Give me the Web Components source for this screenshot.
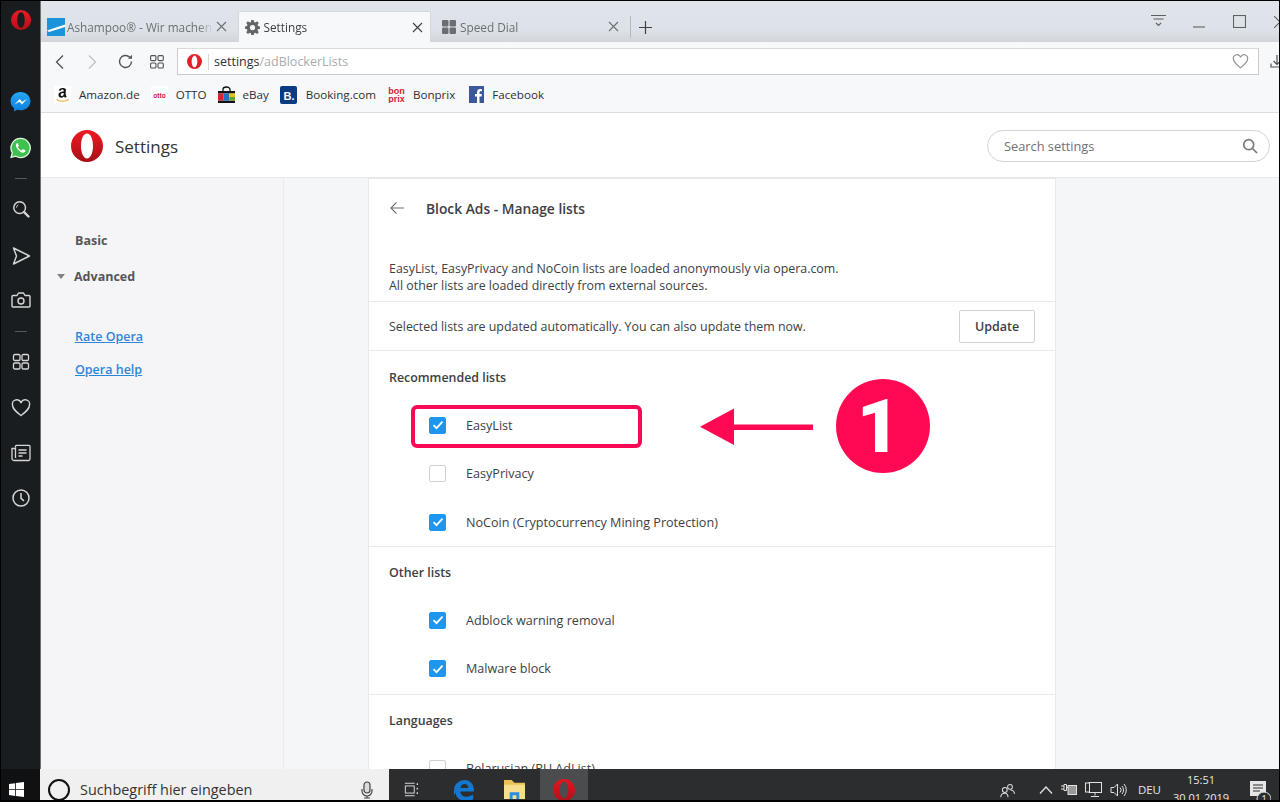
<!DOCTYPE html>
<html lang="en"><head><meta charset="utf-8"><title>Settings</title>
<style>
html,body{margin:0;padding:0;height:100%;overflow:hidden;background:#000}
body{font-family:"Open Sans","Noto Sans",sans-serif}
</style></head><body>
<x-app>
  <x-sidebar slot="side"></x-sidebar>
  <x-tabstrip slot="top"></x-tabstrip>
  <x-toolbar slot="top"></x-toolbar>
  <x-bookmarks slot="top"></x-bookmarks>
  <x-settings-head slot="top"></x-settings-head>
  <x-nav slot="nav"></x-nav>
  <x-card slot="main">
    <x-card-title>Block Ads - Manage lists</x-card-title>
    <x-desc>EasyList, EasyPrivacy and NoCoin lists are loaded anonymously via opera.com.<br>All other lists are loaded directly from external sources.</x-desc>
    <x-update>Selected lists are updated automatically. You can also update them now.</x-update>
    <x-section heading="Recommended lists" style="--pt:18px;--pb:13.800px;--rh:48.500px">
      <x-check checked>EasyList</x-check>
      <x-check>EasyPrivacy</x-check>
      <x-check checked>NoCoin (Cryptocurrency Mining Protection)</x-check>
    </x-section>
    <x-section heading="Other lists" style="--pt:17px;--pb:14px;--pe:1px">
      <x-check checked>Adblock warning removal</x-check>
      <x-check checked>Malware block</x-check>
    </x-section>
    <x-section heading="Languages" last style="--pt:17px;--pb:14px">
      <x-check>Belarusian (RU AdList)</x-check>
    </x-section>
  </x-card>
  <x-taskbar slot="task"></x-taskbar>
  <x-callout slot="over"></x-callout>
</x-app>
<script>
const opera=(s,a='#e8121f',b='#a80d18')=>`<svg width="${s}" height="${s}" viewBox="0 0 32 32" style="display:block"><defs><linearGradient id="og" x1="0" y1="0" x2="0" y2="1"><stop offset="0" stop-color="${a}"/><stop offset="1" stop-color="${b}"/></linearGradient></defs><path fill="url(#og)" fill-rule="evenodd" d="M16 0a16 16 0 1 0 0 32a16 16 0 1 0 0-32zM16 3.6c3.6 0 6 5.5 6 12.400s-2.400 12.400-6 12.400s-6-5.500-6-12.400s2.400-12.400 6-12.400z"/></svg>`;
function def(name,css,html,init){
  customElements.define(name,class extends HTMLElement{
    constructor(){super();const r=this.attachShadow({mode:'open'});
      r.innerHTML=`<style>${css}</style>${typeof html==='function'?html(this):html}`;}
    connectedCallback(){if(init)init(this,this.shadowRoot);}
  });
}
const stroke='fill="none" stroke="currentColor"';

def('x-app',`
:host{display:block;width:1280px;height:802px;box-sizing:border-box;border:solid #000;border-width:1px 1px 2px 1px;position:relative;overflow:hidden}
.shell{display:grid;grid-template-columns:40px 1fr;height:768px;overflow:hidden}
.col{display:flex;flex-direction:column;min-width:0;height:768px}
.body{flex:1;display:flex;min-height:0;overflow:hidden;background:#f5f6f8}
.nav{width:243px;flex:none}
.main{flex:1;display:flex;min-width:0;padding-left:84px}
`,`<div class="shell"><slot name="side"></slot><div class="col"><slot name="top"></slot><div class="body"><div class="nav"><slot name="nav"></slot></div><div class="main"><slot name="main"></slot></div></div></div></div><slot name="task"></slot><slot name="over"></slot>`);

def('x-sidebar',`
:host{display:flex;flex-direction:column;align-items:center;background:#1a1d1f;color:#d6d7d8;border-right:1px solid #6e7072;box-sizing:border-box;height:768px}
div{height:0;display:flex;align-items:center;justify-content:center;flex:none}
hr{width:12px;border:0;border-top:1px solid #55585a;margin:0;flex:none}
`,`
<div style="margin-top:19px">${opera(20,'#ec1b24','#b50f1b')}</div>
<div style="margin-top:82px"><svg width="21" height="22" viewBox="0 0 22 22"><defs><linearGradient id="mg" x1="0" y1="0" x2="0" y2="1"><stop offset="0" stop-color="#24a8f5"/><stop offset="1" stop-color="#0b7fe0"/></linearGradient></defs><path fill="url(#mg)" d="M11 .5C5 .5.6 4.800.6 10.200c0 3 1.400 5.500 3.600 7.300V21l3.300-1.800c1.100.3 2.300.5 3.500.5 6 0 10.400-4.300 10.400-9.500S17 .5 11 .5z"/><path fill="#fff" d="M4.800 13.600l5.300-5.700 2.700 2.800 5-2.800-5.300 5.700-2.700-2.800z"/></svg></div>
<div style="margin-top:46px"><svg width="21" height="22" viewBox="0 0 22 22"><path fill="#3fc14f" stroke="#e4f5e6" stroke-width="1.400" d="M11 1a10 10 0 0 0-8.600 15L1.200 20.800l4.900-1.200A10 10 0 1 0 11 1z"/><path fill="#fff" d="M7.800 5.800c-.9.200-1.700 1.600-1.500 3 .3 2.300 3.900 6.600 7 7.100 1.500.2 2.600-.8 2.800-1.700.1-.6 0-.8-.4-1l-1.900-.9c-.4-.2-.6-.1-.9.300l-.7.8c-.2.200-.4.200-.7.100-1.200-.5-2.500-1.700-3.200-2.900-.1-.3 0-.5.200-.7l.5-.7c.2-.2.200-.5.100-.7l-.8-2c-.2-.5-.5-.7-.5-.7z"/></svg></div>
<hr style="margin-top:30px">
<div style="margin-top:30px"><svg width="18" height="18" viewBox="0 0 20 20" ${stroke} stroke-width="1.600"><circle cx="8.500" cy="8.500" r="6.500"/><path d="M13.500 13.500l4.800 4.800" stroke-width="2.600" stroke-linecap="round"/><path d="M5 8.500a3.500 3.500 0 0 1 2-3.200" stroke-width="1"/></svg></div>
<div style="margin-top:47px"><svg width="20" height="20" viewBox="0 0 20 20" ${stroke} stroke-width="1.400" stroke-linejoin="round"><path d="M2.500 2l16 8-16 8 3-8z"/></svg></div>
<div style="margin-top:44px"><svg width="20" height="20" viewBox="0 0 20 20" ${stroke} stroke-width="1.400" stroke-linejoin="round"><path d="M2 5.500h4l1.500-2.500h5l1.500 2.500h4a1 1 0 0 1 1 1V16a1 1 0 0 1-1 1H2a1 1 0 0 1-1-1V6.500a1 1 0 0 1 1-1z"/><circle cx="10" cy="11" r="3"/></svg></div>
<hr style="margin-top:31px">
<div style="margin-top:30px"><svg width="18" height="18" viewBox="0 0 18 18" ${stroke} stroke-width="1.300"><rect x="1.500" y="1.500" width="6.500" height="6" rx="1.300"/><rect x="10" y="1.500" width="6.500" height="6" rx="1.300"/><rect x="1.500" y="10" width="6.500" height="6" rx="1.300"/><rect x="10" y="10" width="6.500" height="6" rx="1.300"/></svg></div>
<div style="margin-top:46px"><svg width="20" height="18" viewBox="0 0 20 18" ${stroke} stroke-width="1.400"><path d="M10 16.500C5 12.500 1.500 10 1.500 6A4.300 4.300 0 0 1 10 4.200 4.300 4.300 0 0 1 18.500 6c0 4-3.500 6.500-8.500 10.500z"/></svg></div>
<div style="margin-top:45px"><svg width="20" height="18" viewBox="0 0 20 18" ${stroke} stroke-width="1.300"><path d="M4.500 3.500V2.200a.8.800 0 0 1 .8-.8h12.900a.8.800 0 0 1 .8.800V15a1.500 1.500 0 0 1-1.500 1.500H3a2 2 0 0 1-2-2V4.500h3.500V14"/><path d="M7.500 6h8M7.500 9h8M7.500 12h4"/></svg></div>
<div style="margin-top:45px"><svg width="20" height="20" viewBox="0 0 20 20" ${stroke} stroke-width="1.500"><circle cx="10" cy="10" r="8"/><path d="M10 5v5.300l3 2.500"/></svg></div>
`);

def('x-tab',`
:host{display:flex;align-items:center;box-sizing:border-box;height:100%;width:var(--w,190px);font-size:11.800px;color:#6a6f74;padding:0 6px 0 var(--pl,0);gap:2px;flex:none;position:relative}
:host([active]){background:#f7f8fa;color:#3c3f42;border:1px solid #d4d8dc;border-bottom:0;border-radius:2px 2px 0 0}
.ic{width:18px;height:18px;flex:none;display:flex;align-items:center;justify-content:center}
.t{flex:1;white-space:nowrap;overflow:hidden;min-width:0;-webkit-mask-image:linear-gradient(90deg,#000 90%,transparent)}
.x{flex:none;width:13px;height:13px;margin-right:var(--mr,4px)}
`,`<span class="ic"><slot name="icon"></slot></span><span class="t"><slot></slot></span><svg class="x" viewBox="0 0 13 13" fill="none" stroke="currentColor" stroke-width="1.100"><path d="M2 2l9 9M11 2l-9 9"/></svg>`);

def('x-tabstrip',`
:host{display:flex;height:41px;flex:none;box-sizing:border-box;padding:10px 0 0 6px;background:linear-gradient(#e0e5eb 0,#dde2e8 70%,#d2d6db 100%);position:relative;align-items:stretch}
.sep{width:1px;height:22px;background:#b4b8bc;margin:5px 8px 0 0;flex:none}
.plus{width:13px;height:13px;margin-top:10px;color:#3f4245;flex:none}
.ctl{position:absolute;top:0;right:0;display:flex;align-items:center;height:26px;color:#55585b}
.ctl svg{display:block}
`,`
<x-tab style="--w:191px"><svg slot="icon" width="18" height="18" viewBox="0 0 18 18" style="display:block"><rect width="18" height="18" fill="#1b93d8"/><path d="M0 12.500L18 6.500V9L2 14z" fill="#fff"/></svg>Ashampoo® - Wir machen</x-tab>
<x-tab active style="--w:193px;--pl:4.500px;--mr:0px"><svg slot="icon" width="15" height="15" viewBox="0 0 16 16" style="display:block"><path fill="#62666a" fill-rule="evenodd" d="M6.700 0h2.600l.4 2.200 1.300.5 1.900-1.300 1.800 1.800-1.300 1.900.5 1.300 2.100.4v2.600l-2.100.4-.5 1.300 1.300 1.900-1.800 1.800-1.900-1.300-1.300.5-.4 2.200H6.700l-.4-2.200-1.300-.5-1.900 1.300-1.800-1.800 1.300-1.900-.5-1.300L0 9.400V6.800l2.100-.4.500-1.300-1.300-1.900 1.800-1.800L5 2.700l1.300-.5zM8 5.300a2.800 2.800 0 1 0 0 5.600a2.800 2.800 0 1 0 0-5.600z"/></svg>Settings</x-tab>
<span style="width:7px;flex:none"></span>
<x-tab style="--w:192px;--pl:2px"><svg slot="icon" width="14" height="14" viewBox="0 0 13 13" style="display:block"><g fill="#6b6f73"><rect width="6" height="6" rx="1"/><rect x="7" width="6" height="6" rx="1"/><rect y="7" width="6" height="6" rx="1"/><rect x="7" y="7" width="6" height="6" rx="1"/></g></svg>Speed Dial</x-tab>
<span class="sep"></span>
<svg class="plus" viewBox="0 0 13 13" fill="none" stroke="currentColor" stroke-width="1.200"><path d="M6.500 0v13M0 6.500h13"/></svg>
<div class="ctl">
<svg width="16" height="14" viewBox="0 0 16 14" fill="none" stroke="#5d6063" stroke-width="1.100" style="margin-right:26px;margin-top:13px"><path d="M0 1.500h15M2.500 5h10M5 9l2.500 2.500L10 9"/></svg>
<svg width="12" height="2" viewBox="0 0 12 2" style="margin-right:28px;margin-top:25px"><path d="M0 1h12" stroke="#5d6063" stroke-width="1.100"/></svg>
<svg width="13" height="13" viewBox="0 0 13 13" fill="none" stroke="#5d6063" stroke-width="1.100" style="margin-right:28px;margin-top:15px"><rect x=".5" y=".5" width="12" height="12"/></svg>
<svg width="12" height="12" viewBox="0 0 12 12" fill="none" stroke="#5d6063" stroke-width="1.100" style="margin-right:-7px;margin-top:15px"><path d="M0 0l12 12M12 0L0 12"/></svg>
</div>`);

def('x-toolbar',`
:host{display:flex;align-items:center;height:34px;flex:none;background:#f6f8fa;color:#4f5256;position:relative;box-sizing:border-box;padding:6px 0 1px}
svg{display:block;flex:none}
.a{flex:1;height:27px;box-sizing:border-box;margin:0 20px 0 0;border:1px solid #c9cccf;border-top-color:#d8dadc;background:#fff;display:flex;align-items:center;font-size:12.500px;color:#2e3033}
.o{margin:0 6px 0 9px}
.d{width:1px;height:16px;background:#d4d6d8;margin-right:5px}
.g{color:#a9acaf}
.h{margin-left:auto;margin-right:9px;color:#8a8d90}
.dl{position:absolute;right:-5px;top:12px;color:#4f5256}
`,`
<svg width="9" height="16" viewBox="0 0 9 16" fill="none" stroke="currentColor" stroke-width="1.300" style="margin-left:14px"><path d="M8 1.500L1.500 8 8 14.500"/></svg>
<svg width="9" height="16" viewBox="0 0 9 16" fill="none" stroke="#bfc2c5" stroke-width="1.300" style="margin-left:24px"><path d="M1 1.500L7.500 8 1 14.500"/></svg>
<svg width="15" height="15" viewBox="0 0 15 15" fill="none" stroke="currentColor" stroke-width="1.400" style="margin-left:21px"><path d="M13.500 7.500a6 6 0 1 1-1.800-4.300"/><path d="M14 .8v4h-4z" fill="currentColor" stroke="none"/></svg>
<svg width="14" height="14" viewBox="0 0 14 14" fill="none" stroke="currentColor" stroke-width="1.100" style="margin-left:17px;margin-right:13px"><rect x=".6" y=".6" width="5.300" height="5" rx="1"/><rect x="8" y=".6" width="5.300" height="5" rx="1"/><rect x=".6" y="8" width="5.300" height="5" rx="1"/><rect x="8" y="8" width="5.300" height="5" rx="1"/></svg>
<div class="a"><span class="o">${opera(15,'#e8252e','#d81d26')}</span><span class="d"></span><span>settings</span><span class="g">/adBlockerLists</span>
<svg class="h" width="17" height="15" viewBox="0 0 20 18" fill="none" stroke="currentColor" stroke-width="1.400"><path d="M10 16.500C5 12.500 1.500 10 1.500 6A4.300 4.300 0 0 1 10 4.200 4.300 4.300 0 0 1 18.500 6c0 4-3.500 6.500-8.500 10.500z"/></svg></div>
<svg class="dl" width="14" height="14" viewBox="0 0 14 14" fill="none" stroke="currentColor" stroke-width="1.200"><path d="M7 1v9M3.500 7L7 10.500 10.500 7M1 9.500V13h12"/></svg>`);

def('x-bm',`
:host{display:flex;align-items:center;font-size:11.600px;color:#2e3134;white-space:nowrap;flex:none}
.i{width:18px;height:18px;display:flex;align-items:center;justify-content:center;margin-right:var(--g,8px)}
`,`<span class="i"><slot name="i"></slot></span><slot></slot>`);

def('x-bookmarks',`
:host{display:flex;align-items:center;height:37px;flex:none;box-sizing:border-box;background:#f6f8fa;border-bottom:1px solid #dcdfe1;padding:1px 0 0 12px;gap:9px}
`,`
<x-bm style="--g:8px"><svg slot="i" width="17" height="18" viewBox="0 0 17 18"><rect width="17" height="18" fill="#fff"/><path d="M8.600 2C6.300 2 5 3 4.800 4.600l2 .2c.1-.8.600-1.200 1.500-1.200s1.400.5 1.400 1.300v.6C7 5.700 4.500 6.300 4.500 9c0 1.800 1.200 2.800 2.800 2.800 1.200 0 2-.5 2.600-1.200l1.300 1.200 1.500-1.300c-.5-.5-1-1.200-1-2V4.800C12.700 2.900 11 2 8.600 2zm1.100 5.700c0 1.300-.6 2.300-1.700 2.300-.8 0-1.300-.5-1.300-1.300 0-1.400 1.600-1.700 3-1.700z" fill="#111"/><path d="M2.500 13.500c3.500 2.300 8.500 2.300 12 0" fill="none" stroke="#f0a029" stroke-width="1.200"/></svg>Amazon.de</x-bm>
<x-bm style="--g:7px;margin-left:2px"><svg slot="i" width="17" height="18" viewBox="0 0 17 18"><rect width="17" height="18" fill="#fff"/><text x="8.500" y="11.500" text-anchor="middle" font-family="Liberation Sans" font-weight="700" font-size="6.500" fill="#e0121f">otto</text></svg>OTTO</x-bm>
<x-bm style="--g:7px;margin-left:2px"><svg slot="i" width="17" height="18" viewBox="0 0 17 18"><path d="M5 5V3.500a3.500 2.500 0 0 1 7 0V5" fill="none" stroke="#111" stroke-width="1.300"/><rect y="5" width="17" height="2.500" fill="#111"/><rect y="14.500" width="17" height="2.500" fill="#111"/><rect y="7.500" width="5.600" height="7" fill="#d5232a"/><rect x="5.600" y="7.500" width="5.800" height="7" fill="#1d74bd"/><rect x="11.400" y="7.500" width="5.600" height="7" fill="#e8c10f"/><rect x="11.400" y="11" width="5.600" height="3.500" fill="#5aa82e"/></svg>eBay</x-bm>
<x-bm style="--g:8px;margin-left:2px"><svg slot="i" width="17" height="18" viewBox="0 0 17 18"><rect width="17" height="18" rx="2" fill="#0a3a80"/><text x="3.500" y="13.500" font-family="Liberation Sans" font-weight="700" font-size="11" fill="#fff">B.</text></svg>Booking.com</x-bm>
<x-bm style="--g:7px;margin-left:3px"><svg slot="i" width="17" height="17" viewBox="0 0 17 17"><text x="8.500" y="8" text-anchor="middle" font-family="Liberation Sans" font-weight="700" font-size="9" fill="#d5202e">bon</text><text x="8.500" y="15.500" text-anchor="middle" font-family="Liberation Sans" font-weight="700" font-size="9" fill="#d5202e">prix</text></svg>Bonprix</x-bm>
<x-bm style="--g:7px;margin-left:3px"><svg slot="i" width="15" height="17" viewBox="0 0 15 17"><rect width="15" height="17" fill="#3b5998"/><path d="M10.500 17v-6.500h2l.4-2.500h-2.400V6.500c0-.8.300-1.200 1.200-1.200h1.300V3c-.4 0-1-.1-1.800-.1-2 0-3.200 1.200-3.200 3.300V8H6v2.500h2V17z" fill="#fff"/></svg>Facebook</x-bm>
`);

def('x-settings-head',`
:host{display:flex;align-items:center;height:65px;flex:none;box-sizing:border-box;background:#fff;border-bottom:1px solid #e6e7e9;padding:2px 9px 0 30px}
.t{font-size:17px;color:#303336;margin-left:12px;font-weight:500}
.s{margin-left:auto;width:283px;height:32px;box-sizing:border-box;border:1px solid #d2d4d6;border-radius:16px;background:#fff;display:flex;align-items:center;justify-content:space-between;padding:0 11px 0 16px;font-size:12.800px;color:#6e7175}
`,`${opera(32,'#f01a22','#a70f18')}<span class="t">Settings</span><div class="s"><span>Search settings</span><svg width="16" height="16" viewBox="0 0 16 16" fill="none" stroke="#777a7d" stroke-width="1.700"><circle cx="6.700" cy="6.700" r="5"/><path d="M10.500 10.500L15 15"/></svg></div>`);

def('x-nav',`
:host{display:flex;flex-direction:column;height:100%;box-sizing:border-box;background:#f5f5f7;border-right:1px solid #ebebed;padding-top:54px;font-size:12.500px;font-weight:700;color:#54575a}
div{line-height:18px;padding-left:34px;position:relative}
.adv{margin-top:18px;padding-left:33px}
.adv svg{position:absolute;left:16px;top:6px}
a{color:#2f86d9;font-weight:600;text-decoration:underline}
.l1{margin-top:42px}.l2{margin-top:15px}
`,`<div>Basic</div><div class="adv"><svg width="8" height="5" viewBox="0 0 8 5"><path d="M0 0h8L4 5z" fill="#808285"/></svg>Advanced</div><div class="l1"><a>Rate Opera</a></div><div class="l2"><a>Opera help</a></div>`);

def('x-card',`
:host{display:block;width:688px;box-sizing:border-box;background:#fff;border:solid #e8e9eb;border-width:1px 1px 0 1px;height:600px;overflow:hidden;font-size:12.400px;color:#3d4043}
`,`<slot></slot>`);

def('x-card-title',`
:host{display:flex;align-items:center;height:58px;font-size:13.800px;font-weight:600;color:#3d4043;padding-left:21px;box-sizing:border-box}
svg{margin-right:22px;display:block}
`,`<svg width="14" height="14" viewBox="0 0 15 14" fill="none" stroke="#6a6d70" stroke-width="1.200"><path d="M15 7H1.500M7 1L1 7l6 6"/></svg><slot></slot>`);

def('x-desc',`
:host{display:block;padding:23px 20px 7px;line-height:17px;border-bottom:1px solid #e8e9eb;font-size:12.400px;color:#3d4043}
`,`<slot></slot>`);

def('x-update',`
:host{display:flex;align-items:center;height:48px;padding:0 20px;justify-content:space-between;border-bottom:1px solid #e8e9eb;box-sizing:content-box;font-size:12.400px;color:#3d4043}
span{padding-top:1px}
button{width:76px;height:33px;border:1px solid #cfd1d3;border-radius:2px;background:#fff;font:600 12.500px "Open Sans","Noto Sans",sans-serif;color:#3d4043;padding:0}
`,`<span><slot></slot></span><button>Update</button>`);

def('x-section',`
:host{display:block;border-bottom:1px solid #e8e9eb;padding-bottom:var(--pe,0)}
:host([last]){border-bottom:0}
h3{margin:0;font-size:12.400px;font-weight:600;line-height:18px;padding:var(--pt,17px) 20px var(--pb,15px);color:#3d4043}
`,el=>`<h3>${el.getAttribute('heading')}</h3><slot></slot>`);

def('x-check',`
:host{display:flex;align-items:center;height:var(--rh,48.300px);padding-left:60px;font-size:12.600px;color:#3d4043}
.b{width:17px;height:17px;box-sizing:border-box;border-radius:2px;margin-right:20px;flex:none;display:flex;align-items:center;justify-content:center;border:1px solid #cfd0d3;background:#fff}
:host([checked]) .b{background:#1e96f0;border-color:#1e96f0}
svg{display:none}
:host([checked]) svg{display:block}
`,`<span class="b"><svg width="12" height="12" viewBox="0 0 12 12" fill="none" stroke="#fff" stroke-width="1.800"><path d="M1.500 6.200l3 3 6-6.500"/></svg></span><span><slot></slot></span>`);

def('x-taskbar',`
:host{display:flex;position:relative;height:31px;box-sizing:border-box;background:#2b2d2e;color:#e8e8e8;overflow:hidden;font-family:"Open Sans","Noto Sans",sans-serif;align-items:flex-start}
.start{width:39px;height:41px;flex:none;display:flex;align-items:center;justify-content:center;background:#101112;padding-right:8px;box-sizing:border-box}
.search{width:349px;height:41px;flex:none;background:#f0f0f0;display:flex;align-items:center;color:#333;font-size:14.400px;padding:0 0 0 8px;box-sizing:border-box}
.search .mic{margin-left:auto;margin-right:16px}
.ring{border:2.600px solid #111;border-radius:50%;margin-right:10px;box-sizing:border-box;width:22px;height:22px}
.tv{height:41px;display:flex;align-items:center;justify-content:center;flex:none}
.act{background:#4a4c4e}
.tray{margin-left:auto;height:41px;display:flex;align-items:center;gap:8px;padding-right:8px;font-size:12px}
.clock{display:block;width:56px;text-align:center;font-size:11px;line-height:18px;margin:0 10px 0 4px;padding-top:2px;white-space:nowrap;align-self:flex-start}
.clock span{display:block}
svg{display:block;flex:none}
`,`
<div class="start"><svg width="15" height="15" viewBox="0 0 15 15" fill="#fff"><path d="M0 2.100l6.200-.9v6H0zM7 1.100L15 0v7.200H7zM0 8h6.200v6L0 13.100zM7 8h8v7l-8-1.100z"/></svg></div>
<div class="search"><span class="ring"></span><span>Suchbegriff hier eingeben</span><svg class="mic" width="12" height="18" viewBox="0 0 12 18" fill="none" stroke="#444" stroke-width="1.200"><rect x="3" y="1" width="6" height="11" rx="3" fill="#dcdcdc"/><path d="M1 8v2a5 5 0 0 0 10 0V8M6 15v2M3 17h6"/></svg></div>
<div class="tv" style="width:46px"><svg width="16" height="15" viewBox="0 0 18 16" fill="none" stroke="#d8d8d8" stroke-width="1.100"><path d="M1 1h11M1 15h11"/><rect x="1.500" y="4" width="10" height="8"/><path d="M15 1v2M15 6v2M15 11v2" stroke-width="1.500"/></svg></div>
<div class="tv" style="width:58px"><svg width="22" height="22" viewBox="0 0 24 24"><path fill="#1376cf" d="M1 12C1.500 5 7 1 12.500 1 19 1 23 5.500 23 13.500H8c.2 4 3.400 5.800 6.400 5.800 3 0 5.700-1 7.600-2.300v5c-2 1.200-5 2-8 2C6 23.500 2.500 19 3 14.500c-.5 1.500-1.200 2.500-2 3.500zM8.200 9.700h8.500c0-2.500-1.800-4.300-4.100-4.300-2.300 0-4 1.800-4.400 4.300z"/></svg></div>
<div class="tv" style="width:42px"><svg width="23" height="21" viewBox="0 0 24 22"><path fill="#e8c254" d="M1 1h8l3 3h11v17H1z"/><path fill="#f6de8f" d="M1 6h22v15H1z"/><path fill="#2a8fd6" d="M7 21v-7h10v7h-3v-4h-4v4z"/></svg></div>
<div class="tv act" style="width:48px;margin-left:5px">${opera(22,'#e3161f','#b30f18')}</div>
<div class="tray">
<svg width="16" height="16" viewBox="0 0 20 18" fill="none" stroke="#dcdcdc" stroke-width="1.300" style="margin-right:15px"><circle cx="12.500" cy="5" r="3"/><circle cx="6" cy="9" r="3"/><path d="M1 18c0-3 2-5 5-5s4 2 4 5M13 9c3 0 5 2 5 5"/></svg>
<svg width="14" height="8" viewBox="0 0 14 8" fill="none" stroke="#e2e2e2" stroke-width="1.300"><path d="M1 7.500L7 1l6 6.500"/></svg>
<svg width="16" height="12" viewBox="0 0 16 12" fill="none" stroke="#e2e2e2" stroke-width="1"><path d="M0 2h3M0 5h3M3 .5h2.500v6H3zM5.500 3.500H7"/><rect x="7" y="1.500" width="8.500" height="9" fill="#999"/></svg>
<svg width="17" height="16" viewBox="0 0 17 16" fill="none" stroke="#e2e2e2" stroke-width="1"><rect x="4" y=".5" width="12.500" height="10"/><rect x=".5" y="1" width="4" height="9" fill="#2b2d2e"/><path d="M10 10.500v3M6 14.500h8"/></svg>
<svg width="17" height="14" viewBox="0 0 17 14" fill="none" stroke="#e2e2e2" stroke-width="1"><path d="M1 4.500h3L7.500 1v12L4 9.500H1zM10 4.500a3.500 3.500 0 0 1 0 5M12 3a6 6 0 0 1 0 8M14 1a9 9 0 0 1 0 12"/></svg>
<span style="margin-left:3px;font-size:11.500px">DEU</span>
<div class="clock"><span>15:51</span><span>30.01.2019</span></div>
<svg width="24" height="26" viewBox="0 0 24 26" style="align-self:flex-start;margin-top:10px"><path fill="#e6e6e6" d="M3 2h16v15H3z"/><path d="M6 6h10M6 9h10M6 12h7" stroke="#2b2d2e" stroke-width="1"/><circle cx="17" cy="20" r="7" fill="#2b2d2e" stroke="#e0e0e0"/><text x="17" y="24" text-anchor="middle" font-size="10" fill="#e6e6e6" font-family="Open Sans">1</text></svg>
</div>`);

def('x-callout',`
:host{display:block;position:absolute;inset:-1px;pointer-events:none}
.box{position:absolute;left:411px;top:405px;width:231px;height:43px;box-sizing:border-box;border:4px solid #f80a54;border-radius:6px}
svg{position:absolute;left:698px;top:405px}
.c{position:absolute;left:835.500px;top:379px;width:94px;height:94px;border-radius:50%;background:#ff0a52;color:#fff;font:900 75px/94px Roboto,sans-serif;text-align:center;box-sizing:border-box;padding-right:8px}
`,`<div class="box"></div><svg width="118" height="42" viewBox="0 0 118 42"><path fill="#ff0a52" d="M2 21.700L36 3.500v16h79v5.500H36V40z"/></svg><div class="c">1</div>`);
</script>
</body></html>
